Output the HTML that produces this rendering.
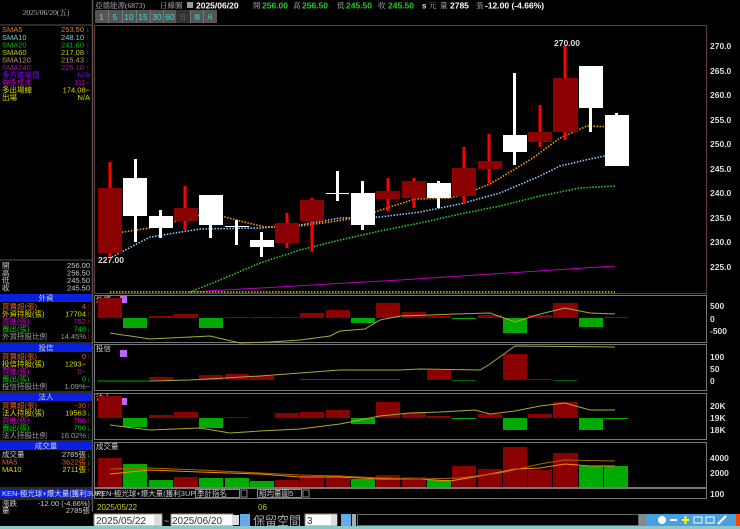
<!DOCTYPE html>
<html><head><meta charset="utf-8"><style>
html,body{margin:0;padding:0;background:#000;width:740px;height:529px;overflow:hidden}
svg{display:block}
text{font-family:"Liberation Sans","Noto Sans CJK TC",sans-serif}
.s{font-family:"Liberation Serif","Noto Serif CJK SC",serif;font-size:7.5px}
.ax{font-size:8.5px;fill:#ddd;font-weight:bold}
.h{font-size:8.5px;font-weight:bold}
</style></head><body>
<svg width="740" height="529" viewBox="0 0 740 529" xmlns="http://www.w3.org/2000/svg">
<rect width="740" height="529" fill="#000"/>
<!-- left panel -->
<line x1="92.5" y1="0" x2="92.5" y2="512" stroke="#555" stroke-width="1.5"/>
<line x1="0" y1="25" x2="92" y2="25" stroke="#555"/>
<text x="46" y="15" class="s" fill="#bbb" text-anchor="middle">2025/06/20(五)</text>
<g class="s">
<text x="2" y="32" fill="#e08020">SMA5</text><text x="84" y="32" fill="#e08020" text-anchor="end">253.50</text><text x="86" y="32" fill="#0c0">↓</text>
<text x="2" y="40" fill="#8cd">SMA10</text><text x="84" y="40" fill="#8cd" text-anchor="end">248.10</text><text x="86" y="40" fill="#f00">↑</text>
<text x="2" y="47.5" fill="#0b0">SMA20</text><text x="84" y="47.5" fill="#0b0" text-anchor="end">241.60</text><text x="86" y="47.5" fill="#f00">↑</text>
<text x="2" y="55" fill="#cc0">SMA60</text><text x="84" y="55" fill="#cc0" text-anchor="end">217.08</text><text x="86" y="55" fill="#f00">↑</text>
<text x="2" y="62.5" fill="#b97">SMA120</text><text x="84" y="62.5" fill="#b97" text-anchor="end">215.43</text><text x="86" y="62.5" fill="#f00">↑</text>
<text x="2" y="70" fill="#b0b">SMA240</text><text x="84" y="70" fill="#b0b" text-anchor="end">225.10</text><text x="86" y="70" fill="#f00">↑</text>
<text x="2" y="77.5" fill="#80f">多方進場價</text><text x="90" y="77.5" fill="#80f" text-anchor="end">N/A</text>
<text x="2" y="85" fill="#b0b">做多成本</text><text x="90" y="85" fill="#b0b" text-anchor="end">111−</text>
<text x="2" y="92.5" fill="#dd0">多出場線</text><text x="90" y="92.5" fill="#dd0" text-anchor="end">174.08−</text>
<text x="2" y="100" fill="#dd0">出場</text><text x="90" y="100" fill="#dd0" text-anchor="end">N/A</text>
</g>
<line x1="0" y1="260" x2="92" y2="260" stroke="#555"/>
<g class="s" fill="#ccc">
<text x="2" y="268">開</text><text x="90" y="268" text-anchor="end">256.00</text>
<text x="2" y="275.5">高</text><text x="90" y="275.5" text-anchor="end">256.50</text>
<text x="2" y="283">低</text><text x="90" y="283" text-anchor="end">245.50</text>
<text x="2" y="290.5">收</text><text x="90" y="290.5" text-anchor="end">245.50</text>
</g>
<g class="s">
<rect x="0" y="294" width="92" height="8" fill="#0a20e0"/><text x="46" y="300.5" fill="#ccc" text-anchor="middle">外資</text>
<text x="2" y="309" fill="#e06020">買賣超(張)</text><text x="86" y="309" fill="#e06020" text-anchor="end">4</text><text x="87" y="309" fill="#f00">↑</text>
<text x="2" y="316.5" fill="#dd0">外資持股(張)</text><text x="86" y="316.5" fill="#dd0" text-anchor="end">17704</text><text x="87" y="316.5" fill="#f00">↑</text>
<text x="2" y="324" fill="#c0c">買進(張)</text><text x="86" y="324" fill="#c0c" text-anchor="end">752</text><text x="87" y="324" fill="#f00">↑</text>
<text x="2" y="331.5" fill="#0c0">賣出(張)</text><text x="86" y="331.5" fill="#0c0" text-anchor="end">748</text><text x="87" y="331.5" fill="#0c0">↓</text>
<text x="2" y="339" fill="#999">外資持股比例</text><text x="86" y="339" fill="#999" text-anchor="end">14.45%</text><text x="87" y="339" fill="#f00">↑</text>
<line x1="0" y1="343" x2="92" y2="343" stroke="#555"/>
<rect x="0" y="344" width="92" height="8" fill="#0a20e0"/><text x="46" y="350.5" fill="#ccc" text-anchor="middle">投信</text>
<text x="2" y="359" fill="#e06020">買賣超(張)</text><text x="86" y="359" fill="#e06020" text-anchor="end">0</text><text x="87" y="359" fill="#f00">↑</text>
<text x="2" y="366.5" fill="#dd0">投信持股(張)</text><text x="86" y="366.5" fill="#dd0" text-anchor="end">1293−</text>
<text x="2" y="374" fill="#c0c">買進(張)</text><text x="86" y="374" fill="#c0c" text-anchor="end">0−</text>
<text x="2" y="381.5" fill="#0c0">賣出(張)</text><text x="86" y="381.5" fill="#0c0" text-anchor="end">0</text><text x="87" y="381.5" fill="#0c0">↓</text>
<text x="2" y="389" fill="#999">投信持股比例</text><text x="90" y="389" fill="#999" text-anchor="end">1.09%−</text>
<line x1="0" y1="392" x2="92" y2="392" stroke="#555"/>
<rect x="0" y="393" width="92" height="8" fill="#0a20e0"/><text x="46" y="399.5" fill="#ccc" text-anchor="middle">法人</text>
<text x="2" y="408" fill="#e06020">買賣超(張)</text><text x="86" y="408" fill="#e06020" text-anchor="end">-30</text><text x="87" y="408" fill="#f00">↑</text>
<text x="2" y="415.5" fill="#dd0">法人持股(張)</text><text x="86" y="415.5" fill="#dd0" text-anchor="end">19563</text><text x="87" y="415.5" fill="#0c0">↓</text>
<text x="2" y="423" fill="#c0c">買進(張)</text><text x="86" y="423" fill="#c0c" text-anchor="end">766</text><text x="87" y="423" fill="#f00">↑</text>
<text x="2" y="430.5" fill="#0c0">賣出(張)</text><text x="86" y="430.5" fill="#0c0" text-anchor="end">796</text><text x="87" y="430.5" fill="#0c0">↓</text>
<text x="2" y="438" fill="#999">法人持股比例</text><text x="86" y="438" fill="#999" text-anchor="end">16.02%</text><text x="87" y="438" fill="#0c0">↓</text>
<line x1="0" y1="441" x2="92" y2="441" stroke="#555"/>
<rect x="0" y="442" width="92" height="8" fill="#0a20e0"/><text x="46" y="448.5" fill="#ccc" text-anchor="middle">成交量</text>
<text x="2" y="457" fill="#ccc">成交量</text><text x="86" y="457" fill="#ccc" text-anchor="end">2785張</text><text x="87" y="457" fill="#0c0">↓</text>
<text x="2" y="464.5" fill="#e06020">MA5</text><text x="86" y="464.5" fill="#e06020" text-anchor="end">3622張</text><text x="87" y="464.5" fill="#0c0">↓</text>
<text x="2" y="472" fill="#dd0">MA10</text><text x="86" y="472" fill="#dd0" text-anchor="end">2711張</text><text x="87" y="472" fill="#f00">↑</text>
<line x1="0" y1="488" x2="92" y2="488" stroke="#555"/>
<rect x="0" y="489" width="92" height="9" fill="#0a20e0"/><text x="2" y="496" fill="#ddd">KEN-極光球+爆大量(獲利3UP)</text>
<line x1="0" y1="499" x2="92" y2="499" stroke="#555"/>
<text x="2" y="506" fill="#ccc">漲跌</text><text x="90" y="506" fill="#ccc" text-anchor="end">-12.00 (-4.66%)</text>
<text x="2" y="513" fill="#ccc">量</text><text x="90" y="513" fill="#ccc" text-anchor="end">2785張</text>
</g>
<!-- header -->
<g>
<text x="95" y="8" class="s" fill="#bbb">亞德能源(6873)</text>
<text x="160" y="8" class="s" fill="#bbb">日線圖</text>
<rect x="187" y="2" width="6" height="6" fill="#999"/>
<text x="196" y="8.5" class="h" fill="#fff">2025/06/20</text>
<text x="253" y="8" class="s" fill="#bbb">開</text><text x="262" y="8.5" class="h" fill="#2c2">256.00</text>
<text x="293" y="8" class="s" fill="#bbb">高</text><text x="302" y="8.5" class="h" fill="#2c2">256.50</text>
<text x="337" y="8" class="s" fill="#bbb">低</text><text x="346" y="8.5" class="h" fill="#2c2">245.50</text>
<text x="378" y="8" class="s" fill="#bbb">收</text><text x="388" y="8.5" class="h" fill="#2c2">245.50</text>
<text x="422" y="8.5" font-size="8" font-weight="bold" fill="#ddd">s</text><text x="429" y="8" class="s" fill="#bbb">元</text>
<text x="440" y="8" class="s" fill="#bbb">量</text><text x="450" y="8.5" class="h" fill="#fff">2785</text>
<text x="476" y="8" class="s" fill="#bbb">張</text>
<text x="485" y="8.5" class="h" fill="#fff">-12.00 (-4.66%)</text>
</g>
<g font-size="8.5" fill="#3dd">
<rect x="95" y="10" width="122" height="13" fill="#555"/>
<rect x="176" y="10" width="14" height="13" fill="#333"/>
<g stroke="#777"><line x1="108.5" y1="10" x2="108.5" y2="23"/><line x1="122.5" y1="10" x2="122.5" y2="23"/><line x1="136.5" y1="10" x2="136.5" y2="23"/><line x1="150.5" y1="10" x2="150.5" y2="23"/><line x1="163.5" y1="10" x2="163.5" y2="23"/><line x1="190.5" y1="10" x2="190.5" y2="23"/><line x1="203.5" y1="10" x2="203.5" y2="23"/></g>
<text x="101.5" y="20" text-anchor="middle">1</text><text x="115" y="20" text-anchor="middle">5</text><text x="129" y="20" text-anchor="middle">10</text><text x="143" y="20" text-anchor="middle">15</text><text x="157" y="20" text-anchor="middle">30</text><text x="170" y="20" text-anchor="middle">60</text>
<text x="183" y="19.5" text-anchor="middle" font-size="6" fill="#666">日</text><text x="197" y="19.5" text-anchor="middle" font-size="6">週</text><text x="210" y="19.5" text-anchor="middle" font-size="6">月</text>
</g>
<!-- main chart frame -->
<rect x="94.5" y="25.5" width="612" height="268" fill="none" stroke="#6a3a3a"/>
<g class="ax">
<text x="710" y="49">270.0</text><text x="710" y="74">265.0</text><text x="710" y="98">260.0</text><text x="710" y="123">255.0</text><text x="710" y="147">250.0</text><text x="710" y="172">245.0</text><text x="710" y="196">240.0</text><text x="710" y="221">235.0</text><text x="710" y="245">230.0</text><text x="710" y="270">225.0</text>
</g>
<g fill="none" stroke-dasharray="1.5 1.5" stroke-width="1.6">
<polyline stroke="#b0b" stroke-dasharray="none" stroke-width="1" points="190,292 400,280 615,266"/>
<polyline stroke="#2c2" points="190,292 220,280 260,263 300,250 340,240 380,231 420,223 460,214 500,206 540,196 580,188 615,186"/>
<polyline stroke="#8cf" points="112,257 150,237 200,229 260,228 300,225 340,218 380,217 420,212 460,204 500,193 540,176 560,166 590,159 615,154"/>
<polyline stroke="#f90" points="110,234 150,228 180,220 210,213 240,221 265,227 300,226 330,222 360,217 390,207 415,199 450,198 470,192 490,184 510,172 533,158 560,138 587,126 615,127"/>
<polyline stroke="#cc0" points="110,292 615,292"/>
</g>
<g fill="#ff0000">
<rect x="108.5" y="162" width="3" height="95"/><rect x="183.5" y="186" width="3" height="44"/><rect x="285.5" y="213" width="3" height="35"/><rect x="310.5" y="198" width="3" height="54"/><rect x="386.5" y="178" width="3" height="33"/><rect x="412.5" y="178" width="3" height="30"/><rect x="462.5" y="147" width="3" height="56"/><rect x="487.5" y="134" width="3" height="49"/><rect x="538.5" y="105" width="3" height="42"/><rect x="563.5" y="46" width="3" height="94"/>
</g>
<g fill="#8b0000">
<rect x="98" y="188" width="24" height="65"/><rect x="174" y="208" width="24" height="13"/><rect x="275" y="223" width="24" height="20"/><rect x="300" y="200" width="24" height="21"/><rect x="376" y="191" width="24" height="8"/><rect x="402" y="181" width="24" height="17"/><rect x="452" y="168" width="24" height="28"/><rect x="478" y="161" width="24" height="8"/><rect x="528" y="132" width="24" height="10"/><rect x="553" y="78" width="25" height="54"/>
</g>
<g fill="#fff">
<rect x="134" y="159" width="3" height="83"/><rect x="123" y="178" width="24" height="38"/>
<rect x="159" y="210" width="3" height="28"/><rect x="149" y="216" width="24" height="12"/>
<rect x="209" y="225" width="3" height="13"/><rect x="199" y="195" width="24" height="30"/>
<rect x="235" y="220" width="3" height="25"/><rect x="225" y="226" width="24" height="1"/>
<rect x="260" y="232" width="3" height="25"/><rect x="250" y="240" width="24" height="7"/>
<rect x="336" y="171" width="3" height="30"/><rect x="326" y="193" width="23" height="1"/>
<rect x="361" y="181" width="3" height="49"/><rect x="351" y="193" width="24" height="32"/>
<rect x="437" y="181" width="3" height="27"/><rect x="427" y="183" width="24" height="15"/>
<rect x="513" y="73" width="3" height="92"/><rect x="503" y="135" width="24" height="17"/>
<rect x="589" y="100" width="3" height="32"/><rect x="579" y="66" width="24" height="42"/>
<rect x="615" y="113" width="3" height="4"/><rect x="605" y="115" width="24" height="51"/>
</g>
<text x="554" y="46" font-size="8.5" font-weight="bold" fill="#ddd">270.00</text>
<text x="98" y="263" font-size="8.5" font-weight="bold" fill="#ddd">227.00</text>
<g fill="none" stroke="#777">
<rect x="94.5" y="295.5" width="612" height="47"/>
<rect x="94.5" y="344.5" width="612" height="46"/>
<rect x="94.5" y="393.5" width="612" height="46"/>
<rect x="94.5" y="442.5" width="612" height="45"/>
<rect x="94.5" y="488.5" width="612" height="10"/>
</g>
<g class="s" fill="#ccc"><text x="96" y="302">外資</text><text x="96" y="351">投信</text><text x="96" y="400">法人</text><text x="96" y="449">成交量</text></g>
<g fill="#b6f"><rect x="120" y="296" width="7" height="7"/><rect x="120" y="350" width="7" height="7"/><rect x="120" y="398" width="7" height="7"/></g>
<g class="ax"><text x="710" y="309">500</text><text x="710" y="322">0</text><text x="710" y="334">-500</text>
<text x="710" y="360">100</text><text x="710" y="372">50</text><text x="710" y="384">0</text>
<text x="710" y="409">20K</text><text x="710" y="421">19K</text><text x="710" y="433">18K</text>
<text x="710" y="461">4000</text><text x="710" y="476">2000</text><text x="710" y="497">100</text></g>
<g fill="#8b0000"><rect x="98" y="298" width="24" height="20"/><rect x="149" y="316" width="24" height="2"/><rect x="174" y="314" width="24" height="4"/><rect x="225" y="317" width="24" height="1"/><rect x="250" y="317" width="24" height="1"/><rect x="275" y="317" width="24" height="1"/><rect x="300" y="313" width="24" height="5"/><rect x="326" y="310" width="24" height="8"/><rect x="376" y="303" width="24" height="15"/><rect x="402" y="312" width="24" height="6"/><rect x="427" y="316" width="24" height="2"/><rect x="478" y="315" width="24" height="3"/><rect x="528" y="315" width="24" height="3"/><rect x="553" y="303" width="25" height="15"/><rect x="604" y="317" width="24" height="1"/></g>
<g fill="#0a0"><rect x="123" y="318" width="24" height="10"/><rect x="199" y="318" width="24" height="10"/><rect x="351" y="318" width="24" height="5"/><rect x="452" y="318" width="24" height="1"/><rect x="503" y="318" width="24" height="15"/><rect x="579" y="318" width="24" height="9"/></g>
<polyline fill="none" stroke="#aa3" points="110,333 150,339 190,337 210,336 240,343 270,342 300,340 330,336 340,331 365,329 380,320 400,316 430,315 455,314 490,313 515,322 540,314 565,308 590,313 615,314"/>
<g fill="#8b0000"><rect x="149" y="377" width="24" height="3"/><rect x="199" y="375" width="24" height="5"/><rect x="225" y="374" width="24" height="6"/><rect x="250" y="376" width="24" height="4"/><rect x="427" y="370" width="24" height="10"/><rect x="503" y="354" width="24" height="26"/><rect x="528" y="379" width="24" height="1"/></g>
<g fill="#060"><rect x="300" y="379" width="100" height="1"/><rect x="452" y="380" width="24" height="1"/><rect x="553" y="380" width="24" height="1"/></g>
<polyline fill="none" stroke="#0a0" points="98,381 150,381"/>
<polyline fill="none" stroke="#aa3" points="150,381 190,380 260,376 300,373 340,370 400,370 420,369 480,370 490,364 515,346 615,347"/>
<g fill="#8b0000"><rect x="98" y="396" width="24" height="22"/><rect x="149" y="415" width="24" height="3"/><rect x="174" y="412" width="24" height="6"/><rect x="225" y="417" width="24" height="1"/><rect x="275" y="413" width="24" height="5"/><rect x="300" y="412" width="24" height="6"/><rect x="326" y="410" width="24" height="8"/><rect x="376" y="402" width="24" height="16"/><rect x="402" y="413" width="24" height="5"/><rect x="427" y="416" width="24" height="2"/><rect x="478" y="414" width="24" height="4"/><rect x="528" y="414" width="24" height="4"/><rect x="553" y="402" width="25" height="16"/></g>
<g fill="#0a0"><rect x="123" y="418" width="24" height="9"/><rect x="199" y="418" width="24" height="10"/><rect x="351" y="418" width="24" height="6"/><rect x="452" y="418" width="24" height="1"/><rect x="503" y="418" width="24" height="12"/><rect x="579" y="418" width="24" height="12"/><rect x="604" y="418" width="24" height="1"/></g>
<polyline fill="none" stroke="#aa3" points="110,425 150,430 200,428 230,433 260,431 300,429 340,424 380,416 410,413 440,412 475,410 490,414 515,411 540,406 565,403 590,410 615,410"/>
<g fill="#8b0000"><rect x="98" y="458" width="24" height="29"/><rect x="174" y="477" width="24" height="10"/><rect x="275" y="480" width="24" height="7"/><rect x="300" y="476" width="24" height="11"/><rect x="326" y="476" width="24" height="11"/><rect x="376" y="475" width="24" height="12"/><rect x="402" y="477" width="24" height="10"/><rect x="452" y="466" width="24" height="21"/><rect x="478" y="469" width="24" height="18"/><rect x="503" y="447" width="24" height="40"/><rect x="528" y="470" width="24" height="17"/><rect x="553" y="453" width="25" height="34"/></g>
<g fill="#0a0"><rect x="123" y="464" width="24" height="23"/><rect x="149" y="480" width="24" height="7"/><rect x="199" y="478" width="24" height="9"/><rect x="225" y="478" width="24" height="9"/><rect x="250" y="481" width="24" height="6"/><rect x="351" y="479" width="24" height="8"/><rect x="427" y="480" width="24" height="7"/><rect x="579" y="466" width="24" height="21"/><rect x="604" y="466" width="24" height="21"/></g>
<polyline fill="none" stroke="#f80" points="110,474 150,470 200,472 260,474 300,477 340,477 380,479 420,479 450,481 480,476 515,469 540,468 565,464 590,466 615,466"/>
<polyline fill="none" stroke="#a60" points="110,469 150,468 200,470 260,473 300,475 340,476 380,478 420,479 460,478 500,473 540,464 565,460 615,461"/>
<g class="s">
<text x="96" y="496" fill="#ccc">KEN-極光球+爆大量(獲利3UP)</text>
<rect x="195.5" y="489.5" width="44" height="8" fill="#000" stroke="#888"/><text x="197" y="496" fill="#ccc">季計指名</text><rect x="241" y="490" width="6" height="7" fill="#000" stroke="#888"/>
<rect x="257.5" y="489.5" width="44" height="8" fill="#000" stroke="#888"/><text x="259" y="496" fill="#ccc">組均量圖5</text><rect x="303" y="490" width="6" height="7" fill="#000" stroke="#888"/>
</g>
<text x="97" y="510" font-size="8" fill="#cc0">2025/05/22</text>
<text x="258" y="510" font-size="8" fill="#cc0">06</text>
<rect x="94" y="514" width="68" height="12" fill="#fff" stroke="#888"/>
<text x="96" y="524" font-size="10" fill="#333">2025/05/22</text><rect x="154" y="515" width="7" height="10" fill="#ddd"/>
<text x="164" y="524" font-size="9" fill="#ccc">~</text>
<rect x="171" y="514" width="62" height="12" fill="#fff" stroke="#888"/>
<text x="172" y="524" font-size="10" fill="#333">2025/06/20</text><rect x="232" y="515" width="7" height="10" fill="#ddd"/>
<rect x="240" y="514" width="10" height="12" fill="#6ae"/>
<text x="253" y="525" font-family="Liberation Serif,Noto Serif CJK SC,serif" font-size="12" fill="#aaa">保留空間</text>
<rect x="305" y="514" width="32" height="12" fill="#fff" stroke="#888"/><text x="307" y="524" font-size="10" fill="#333">3</text><rect x="331" y="515" width="6" height="10" fill="#ddd"/>
<rect x="341" y="514" width="10" height="12" fill="#6ae"/>
<rect x="352" y="514" width="4" height="12" fill="#aaa"/>
<rect x="357.5" y="514.5" width="281" height="11" fill="#000" stroke="#666"/>
<rect x="639" y="514" width="7" height="12" fill="#888"/>
<rect x="646" y="514" width="94" height="12" fill="#4aa0e0"/>
<g fill="#fff"><circle cx="662" cy="520" r="4"/><rect x="670" y="519" width="7" height="2"/><rect x="682" y="519" width="7" height="2" fill="#ff0"/><rect x="684.5" y="516" width="2" height="8" fill="#ff0"/><rect x="694" y="517" width="8" height="6" fill="none" stroke="#fff"/><rect x="706" y="517" width="8" height="6" fill="none" stroke="#fff"/><path d="M718 524 L726 516" stroke="#fff" stroke-width="2"/></g>
<rect x="736" y="514" width="4" height="12" fill="#f40"/>
<rect x="0" y="526" width="740" height="3" fill="#8cc8c8"/>
</svg>
</body></html>
